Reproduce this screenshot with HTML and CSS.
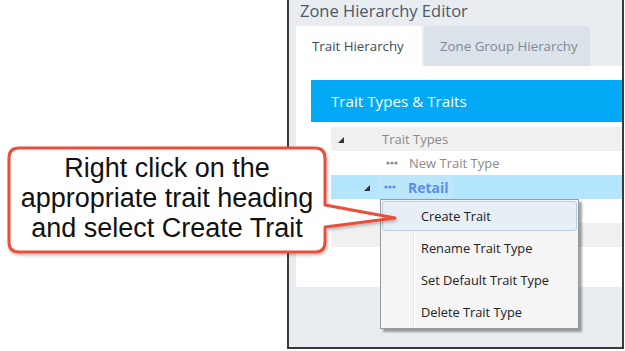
FILE: index.html
```html
<!DOCTYPE html>
<html lang="en">
<head>
    <meta charset="UTF-8">
    <title>Zone Hierarchy Editor</title>
    <link rel="stylesheet" href="styles.css">
</head>
<body>
    <div class="editor">
        <div class="editor-title">Zone Hierarchy Editor</div>
        <div class="tabs">
            <div class="tab active">Trait Hierarchy</div>
            <div class="tab">Zone Group Hierarchy</div>
        </div>
        <div class="panel">
            <div class="panel-header">Trait Types &amp; Traits</div>
            <div class="tree">
                <div class="row shaded">
                    <svg class="toggle" width="6" height="6" viewBox="0 0 6 6"><polygon points="6,0 6,6 0,6"/></svg>
                    <span class="root-label">Trait Types</span>
                </div>
                <div class="row">
                    <span class="node">
                        <svg class="dots" width="12" height="4" viewBox="0 0 12 4"><circle cx="2" cy="2" r="1.6"/><circle cx="6" cy="2" r="1.6"/><circle cx="10" cy="2" r="1.6"/></svg>
                        <span class="label">New Trait Type</span>
                    </span>
                </div>
                <div class="row selected">
                    <svg class="toggle child" width="6" height="6" viewBox="0 0 6 6"><polygon points="6,0 6,6 0,6"/></svg>
                    <span class="node picked">
                        <svg class="dots" width="12" height="4" viewBox="0 0 12 4"><circle cx="2" cy="2" r="1.6"/><circle cx="6" cy="2" r="1.6"/><circle cx="10" cy="2" r="1.6"/></svg>
                        <span class="label">Retail</span>
                    </span>
                </div>
                <div class="row"></div>
                <div class="row shaded"></div>
            </div>
        </div>
    </div>

    <!-- context menu opened on "Retail" -->
    <ul class="context-menu">
        <li class="hover">Create Trait</li>
        <li>Rename Trait Type</li>
        <li>Set Default Trait Type</li>
        <li>Delete Trait Type</li>
    </ul>

    <!-- callout -->
    <svg class="callout-shape" width="400" height="262" viewBox="0 0 400 262">
        <defs>
            <filter id="soft" x="-5%" y="-5%" width="115%" height="120%">
                <feDropShadow dx="1" dy="2" stdDeviation="1.5" flood-color="#000" flood-opacity="0.25"/>
            </filter>
        </defs>
        <path d="M19,148 H315 Q325,148 325,158 V205 L395,218 L325,227 V242 Q325,252 315,252 H19 Q9,252 9,242 V158 Q9,148 19,148 Z"
              fill="#fff" stroke="#e9503a" stroke-width="3" stroke-linejoin="round" filter="url(#soft)"/>
    </svg>
    <div class="callout-text">Right click on the<br>appropriate trait heading<br>and select Create Trait</div>
</body>
</html>
```

FILE: styles.css
```css
body {
    margin: 0;
    width: 625px;
    height: 351px;
    overflow: hidden;
    background: #fff;
    font-family: 'Open Sans', 'Noto Sans', sans-serif;
    position: relative;
}
.editor {
    box-sizing: border-box;
    margin-left: 287px;
    width: 337px;
    height: 350px;
    background: #e9edf2;
    border: 2px solid #3a3a3a;
    border-top: none;
    padding-left: 7px;
}
.editor-title {
    height: 26px;
    line-height: 22px;
    margin-top: -1px;
    padding-left: 4px;
    font-size: 16.5px;
    color: #4b5968;
    padding-top: 1px;
}
.tabs {
    display: flex;
    height: 40px;
    gap: 2px;
}
.tab {
    box-sizing: border-box;
    width: 166px;
    padding-left: 16px;
    line-height: 40px;
    font-size: 13.3px;
    white-space: nowrap;
    background: #dbe2ea;
    color: #808a96;
    border-radius: 3px 3px 0 0;
}
.tab.active {
    width: 126px;
    background: #fff;
    color: #3e4c5c;
}
.panel {
    background: #fff;
    height: 221px;
    padding: 14px 0 0 15px;
    box-sizing: border-box;
}
.panel-header {
    height: 42px;
    line-height: 42px;
    background: #03a9f4;
    color: #fff;
    font-size: 15.2px;
    padding-left: 20px;
}
.tree {
    margin-top: 5px;
    padding-left: 20px;
}
.row {
    height: 24px;
    display: flex;
    align-items: center;
    font-size: 13px;
    color: #8a8a8a;
}
.row.shaded {
    background: #f0f0f0;
}
.row.selected {
    background: #b3e5fc;
}
.toggle {
    fill: #333;
    margin-left: 7px;
    margin-top: 2px;
}
.toggle.child {
    margin-left: 33px;
}
.root-label {
    margin-left: 38px;
}
.node {
    display: flex;
    align-items: center;
    height: 22px;
    margin-left: 48px;
    padding: 0 4px 0 7px;
}
.selected .node {
    margin-left: 7px;
}
.node.picked {
    background: #bce7fb;
}
.dots {
    margin-right: 11px;
    fill: #8a8a8a;
}
.picked .dots {
    fill: #5b8ee6;
    margin-right: 12px;
}
.picked .label {
    color: #5b8ee6;
    font-weight: bold;
    font-size: 14px;
}
.context-menu {
    position: absolute;
    left: 380px;
    top: 199px;
    width: 199px;
    margin: 0;
    padding: 0;
    list-style: none;
    box-sizing: border-box;
    background: #f5f5f5 linear-gradient(to right, transparent 32px, #e2e2e2 32px, #e2e2e2 33px, #fff 33px, #fff 34px, transparent 34px);
    border: 1px solid #9a9a9a;
    box-shadow: 3px 3px 2px rgba(0, 0, 0, 0.35);
}
.context-menu li {
    height: 32px;
    line-height: 32px;
    padding-left: 40px;
    font-size: 12.8px;
    color: #222;
}
.context-menu li.hover {
    margin: 1px;
    height: 28px;
    line-height: 28px;
    padding-left: 38px;
    background: #e6eef6;
    border: 1px solid #b8cfe2;
    border-radius: 3px;
}
.callout-shape {
    position: absolute;
    left: 0;
    top: 0;
}
.callout-text {
    position: absolute;
    left: 9px;
    top: 153px;
    width: 316px;
    text-align: center;
    font-family: 'Liberation Sans', Arial, sans-serif;
    font-size: 27px;
    line-height: 30px;
    color: #111;
}
```
